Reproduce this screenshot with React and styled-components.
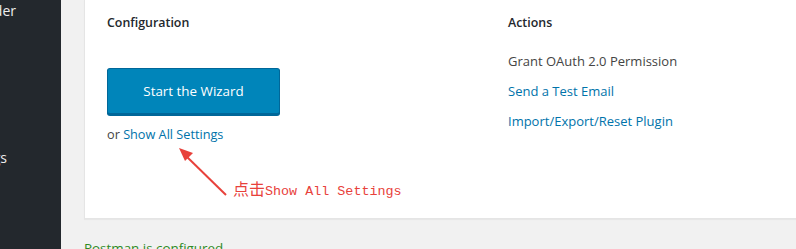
import React from "react";
import styled, { createGlobalStyle } from "styled-components";

const Global = createGlobalStyle`
  html, body {
    margin: 0;
    padding: 0;
    width: 796px;
    height: 249px;
    overflow: hidden;
    background: #f1f1f1;
    font-family: "Open Sans", "Noto Sans", sans-serif;
  }
`;

const Page = styled.div`
  display: flex;
  width: 796px;
  height: 249px;
  overflow: hidden;
`;

const Sidebar = styled.nav`
  flex: 0 0 61px;
  background: #23282d;
  color: #eee;
  font-size: 14px;
  display: flex;
  flex-direction: column;
  overflow: hidden;
`;

// menu labels run past the left edge of the crop, only their ends show
const MenuItem = styled.div`
  height: ${(p) => p.h}px;
  line-height: 22px;
  white-space: nowrap;
  display: flex;
  justify-content: flex-end;
  padding-right: ${(p) => p.pad}px;
`;

const Main = styled.main`
  flex: 1;
  padding-left: 23px;
  overflow: hidden;
`;

const Card = styled.section`
  position: relative;
  width: 760px;
  height: 219px;
  box-sizing: border-box;
  background: #fff;
  border: 1px solid #e5e5e5;
  border-top: none;
  box-shadow: 0 1px 1px rgba(0, 0, 0, 0.04);
  padding: 15px 0 0 22px;
  display: grid;
  grid-template-columns: 401px 1fr;
`;

const Column = styled.div`
  display: flex;
  flex-direction: column;
  align-items: flex-start;
`;

const Heading = styled.h3`
  margin: 0;
  font-size: 12.4px;
  font-weight: 600;
  line-height: 16px;
  color: #23282d;
`;

const WizardButton = styled.button`
  margin-top: 37px;
  width: 173px;
  height: 47px;
  border: 1px solid #006799;
  border-bottom-width: 2px;
  border-radius: 3px;
  background: #0085ba;
  color: #fff;
  font-family: inherit;
  font-size: 13.4px;
  cursor: pointer;
  box-shadow: 0 1px 0 #006799;
`;

const Alt = styled.p`
  margin: 10px 0 0;
  font-size: 12.7px;
  line-height: 18px;
  color: #444;
`;

const Link = styled.a`
  color: #0073aa;
  text-decoration: none;
`;

const ActionList = styled.ul`
  list-style: none;
  margin: 20px 0 0;
  padding: 0;
  font-size: 13px;
  line-height: 20px;
`;

const Action = styled.li`
  margin-bottom: 10px;
  color: ${(p) => (p.muted ? "#444" : "#0073aa")};
`;

const Note = styled.div`
  position: absolute;
  left: 148px;
  top: 178px;
  color: #e8413b;
  font-family: "Liberation Mono", monospace;
  font-size: 13.4px;
  line-height: 20px;
  white-space: nowrap;
`;

const Han = styled.span`
  font-family: "Noto Sans CJK SC", sans-serif;
  font-size: 16px;
`;

const Arrow = styled.svg`
  position: absolute;
  left: 90px;
  top: 140px;
  overflow: visible;
`;

const Status = styled.p`
  margin: 19px 0 0;
  font-size: 13.4px;
  line-height: 20px;
  color: #2e8a1e;
`;

export default function App() {
  return (
    <Page>
      <Global />
      <Sidebar>
        <MenuItem h={147} pad={45}>Mail Sender</MenuItem>
        <MenuItem h={30} pad={54}>Settings</MenuItem>
      </Sidebar>
      <Main>
        <Card>
          <Column>
            <Heading>Configuration</Heading>
            <WizardButton>Start the Wizard</WizardButton>
            <Alt>
              or <Link href="#">Show All Settings</Link>
            </Alt>
          </Column>
          <Column>
            <Heading>Actions</Heading>
            <ActionList>
              <Action muted>Grant OAuth 2.0 Permission</Action>
              <Action>Send a Test Email</Action>
              <Action>Import/Export/Reset Plugin</Action>
            </ActionList>
          </Column>
          <Arrow width="60" height="60">
            <line x1="51" y1="55" x2="9" y2="14" stroke="#e8413b" strokeWidth="2" />
            <polygon points="4,8 18,13 10,21" fill="#e8413b" />
          </Arrow>
          <Note>
            <Han>点击</Han>Show All Settings
          </Note>
        </Card>
        <Status>Postman is configured.</Status>
      </Main>
    </Page>
  );
}
